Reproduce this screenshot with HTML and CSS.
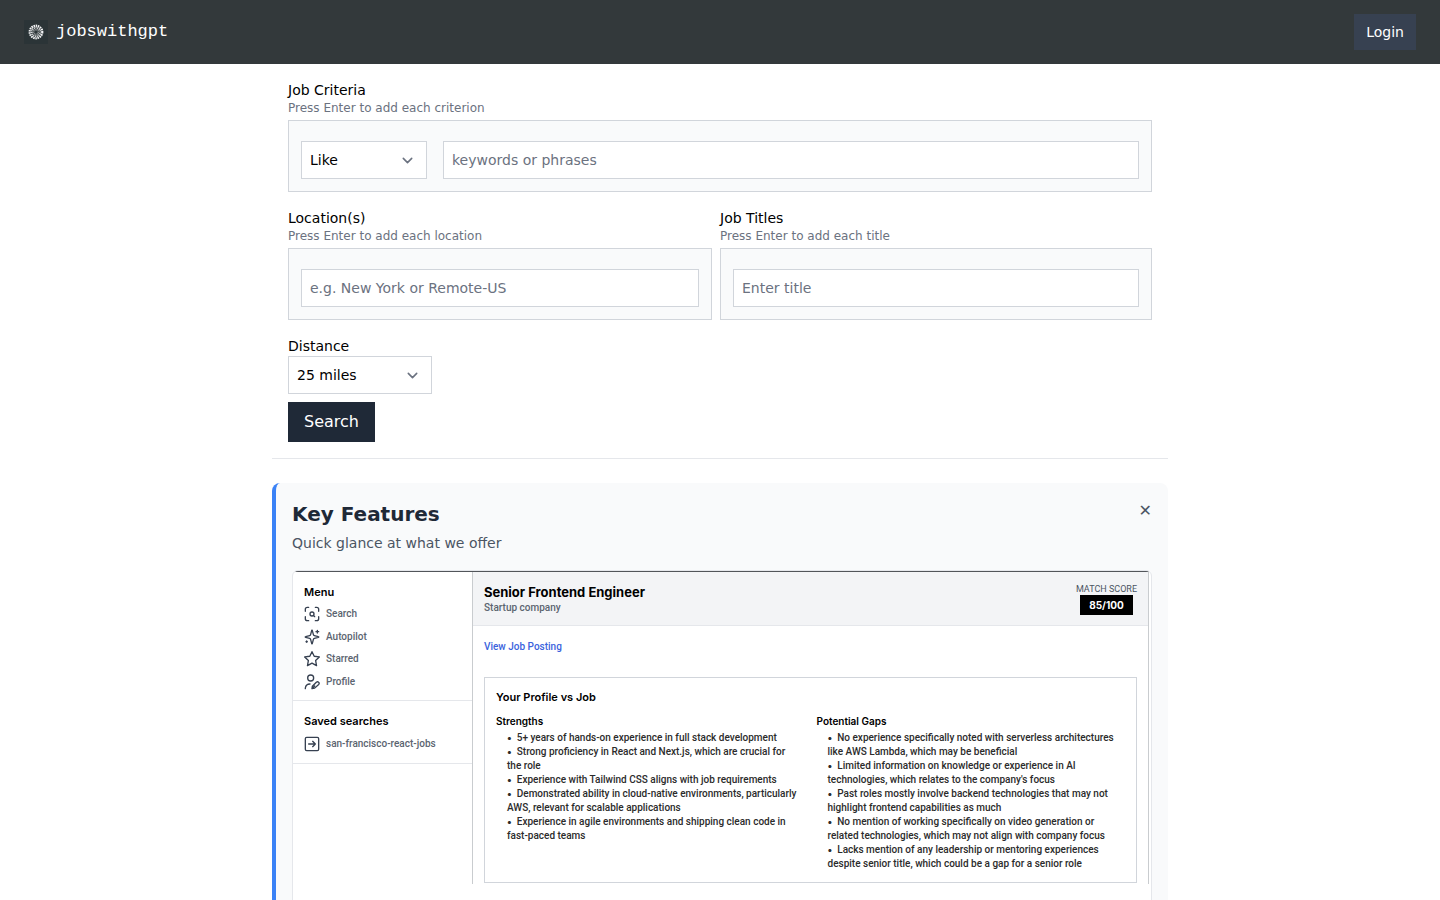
FILE: index.html
```
<!DOCTYPE html>
<html lang="en">
<head>
    <meta charset="UTF-8">
    <meta name="viewport" content="width=device-width, initial-scale=1.0">
    <title>jobswithgpt</title>
    <link rel="stylesheet" href="styles.css">
</head>
<body>

    <header class="navbar">
        <a class="brand" href="/">
            <svg class="brand-logo" viewBox="0 0 24 24" aria-hidden="true">
                <rect width="24" height="24" fill="#2b3437"/>
                <g fill="none" stroke="#f3f4f6">
                    <circle cx="12" cy="12" r="6.3" stroke-width="2.2" stroke-dasharray="1.5 0.7"/>
                    <circle cx="12" cy="12" r="4.3" stroke-width="1.8" stroke-dasharray="1.1 0.7" stroke-dashoffset="0.6" stroke-opacity="0.85"/>
                    <circle cx="12" cy="12" r="2.4" stroke-width="1.6" stroke-dasharray="1 0.5" stroke-opacity="0.5"/>
                </g>
            </svg>
            <span>jobswithgpt</span>
        </a>
        <a class="login-btn" href="/login">Login</a>
    </header>

    <main class="page">
        <form class="search-form">
            <div class="field">
                <label for="criteria">Job Criteria</label>
                <p class="hint">Press Enter to add each criterion</p>
                <div class="field-box">
                    <div class="select-wrap select-like">
                        <select id="match-type" aria-label="Match type">
                            <option>Like</option>
                            <option>Not like</option>
                        </select>
                        <svg class="chevron" viewBox="0 0 20 20"><path d="M6 8l4 4 4-4"/></svg>
                    </div>
                    <input type="text" id="criteria" placeholder="keywords or phrases">
                </div>
            </div>

            <div class="field-row">
                <div class="field">
                    <label for="location">Location(s)</label>
                    <p class="hint">Press Enter to add each location</p>
                    <div class="field-box">
                        <input type="text" id="location" placeholder="e.g. New York or Remote-US">
                    </div>
                </div>
                <div class="field">
                    <label for="title">Job Titles</label>
                    <p class="hint">Press Enter to add each title</p>
                    <div class="field-box">
                        <input type="text" id="title" placeholder="Enter title">
                    </div>
                </div>
            </div>

            <div class="field-distance">
                <label for="distance">Distance</label>
                <div class="select-wrap select-distance">
                    <select id="distance">
                        <option>25 miles</option>
                        <option>50 miles</option>
                        <option>100 miles</option>
                    </select>
                    <svg class="chevron" viewBox="0 0 20 20"><path d="M6 8l4 4 4-4"/></svg>
                </div>
            </div>

            <button type="submit" class="search-btn">Search</button>
        </form>

        <section class="features">
            <div class="features-header">
                <div>
                    <h2>Key Features</h2>
                    <p>Quick glance at what we offer</p>
                </div>
                <button type="button" class="close-btn" aria-label="Close">✕</button>
            </div>

            <div class="slide">
                <div class="preview">
                    <aside class="sidebar">
                        <nav class="side-group">
                            <h3>Menu</h3>
                            <ul class="side-menu">
                                <li>
                                    <svg class="icon" viewBox="0 0 24 24"><path d="M2 8V5a3 3 0 0 1 3-3h2M17 2h2a3 3 0 0 1 3 3v3M22 16v3a3 3 0 0 1-3 3h-2M7 22H5a3 3 0 0 1-3-3v-3M16 16l-1.900-1.900"/><circle cx="12" cy="12" r="3"/></svg>
                                    Search
                                </li>
                                <li>
                                    <svg class="icon" viewBox="0 0 24 24"><path d="M9.900 15.500A2 2 0 0 0 8.500 14.100L2.400 12.500a.5.5 0 0 1 0-1L8.500 9.900A2 2 0 0 0 9.900 8.500l1.600-6.100a.5.5 0 0 1 1 0L14.100 8.500A2 2 0 0 0 15.500 9.900l6.100 1.600a.5.5 0 0 1 0 1L15.500 14.100a2 2 0 0 0-1.400 1.400l-1.600 6.100a.5.5 0 0 1-1 0zM20 2v4M22 4h-4M4 18v2M5 19H3"/></svg>
                                    Autopilot
                                </li>
                                <li>
                                    <svg class="icon" viewBox="0 0 24 24"><path d="M12 1l3.300 6.900 7.700 1-5.600 5.300 1.400 7.800L12 18.300 5.200 22l1.400-7.800L1 8.900l7.700-1z"/></svg>
                                    Starred
                                </li>
                                <li>
                                    <svg class="icon" viewBox="0 0 24 24"><circle cx="10" cy="6" r="4.500"/><path d="M2 22v-1a7 7 0 0 1 7-6M12 22l.5-3.500 6-6a2.100 2.100 0 0 1 3.500 3.200l-6 5.500zM12 22l4-4"/></svg>
                                    Profile
                                </li>
                            </ul>
                        </nav>
                        <div class="side-group">
                            <h3>Saved searches</h3>
                            <ul class="side-saved">
                                <li>
                                    <svg class="icon" viewBox="0 0 24 24"><rect x="2" y="2" width="20" height="20" rx="2"/><path d="M7 12h10M13 8l4 4-4 4"/></svg>
                                    san-francisco-react-jobs
                                </li>
                            </ul>
                        </div>
                    </aside>

                    <div class="job">
                        <div class="job-header">
                            <div>
                                <h3>Senior Frontend Engineer</h3>
                                <p>Startup company</p>
                            </div>
                            <div class="score">
                                <span class="score-label">MATCH SCORE</span>
                                <span class="score-value">85/100</span>
                            </div>
                        </div>
                        <a class="job-link" href="#">View Job Posting</a>
                        <div class="compare">
                            <h4>Your Profile vs Job</h4>
                            <div class="compare-cols">
                                <div>
                                    <h5>Strengths</h5>
                                    <ul>
                                        <li>5+ years of hands-on experience in full stack development</li>
                                        <li>Strong proficiency in React and Next.js, which are crucial for the role</li>
                                        <li>Experience with Tailwind CSS aligns with job requirements</li>
                                        <li>Demonstrated ability in cloud-native environments, particularly AWS, relevant for scalable applications</li>
                                        <li>Experience in agile environments and shipping clean code in fast-paced teams</li>
                                    </ul>
                                </div>
                                <div>
                                    <h5>Potential Gaps</h5>
                                    <ul>
                                        <li>No experience specifically noted with serverless architectures like AWS Lambda, which may be beneficial</li>
                                        <li>Limited information on knowledge or experience in AI technologies, which relates to the company's focus</li>
                                        <li>Past roles mostly involve backend technologies that may not highlight frontend capabilities as much</li>
                                        <li>No mention of working specifically on video generation or related technologies, which may not align with company focus</li>
                                        <li>Lacks mention of any leadership or mentoring experiences despite senior title, which could be a gap for a senior role</li>
                                    </ul>
                                </div>
                            </div>
                        </div>
                    </div>
                </div>
            </div>
        </section>
    </main>

</body>
</html>
```
FILE: styles.css
```
* {
    box-sizing: border-box;
}
body {
    margin: 0;
    font-family: 'DejaVu Sans', sans-serif;
    font-size: 14px;
    line-height: 20px;
    color: #000;
    background-color: #fff;
}
h2, h3, h4, h5, p, ul {
    margin: 0;
    padding: 0;
}
ul {
    list-style: none;
}

/* Top bar */
.navbar {
    display: flex;
    align-items: center;
    justify-content: space-between;
    height: 64px;
    padding: 0 24px;
    background-color: #33393b;
}
.brand {
    display: flex;
    align-items: center;
    gap: 8px;
    color: #fff;
    font-family: 'Liberation Mono', monospace;
    font-size: 17px;
    text-decoration: none;
}
.brand-logo {
    width: 24px;
    height: 24px;
}
.login-btn {
    padding: 8px 12px;
    color: #fff;
    background-color: #374151;
    text-decoration: none;
}

/* Search form */
.page {
    max-width: 896px;
    margin: 0 auto;
}
.search-form {
    padding: 16px;
    border-bottom: 1px solid #e5e7eb;
}
label {
    display: block;
}
.hint {
    margin-bottom: 4px;
    font-size: 12px;
    line-height: 16px;
    color: #6b7280;
}
.field {
    margin-bottom: 16px;
}
.field-row {
    display: grid;
    grid-template-columns: 1fr 1fr;
}
.field-row .field:first-child {
    padding-right: 8px;
}
.field-box {
    display: flex;
    gap: 16px;
    padding: 20px 12px 12px;
    border: 1px solid #d1d5db;
    background-color: #f9fafb;
}
input,
select {
    width: 100%;
    height: 38px;
    padding: 8px;
    border: 1px solid #d1d5db;
    border-radius: 0;
    font: inherit;
    color: #000;
    background-color: #fff;
}
input::placeholder {
    color: #6b7280;
    opacity: 1;
}
select {
    appearance: none;
}
.select-wrap {
    position: relative;
    flex-shrink: 0;
}
.select-like {
    width: 126px;
}
.select-distance {
    width: 144px;
}
.chevron {
    position: absolute;
    top: 9px;
    right: 9px;
    width: 21px;
    height: 21px;
    fill: none;
    stroke: #6b7280;
    stroke-width: 1.5;
    stroke-linecap: round;
    stroke-linejoin: round;
    pointer-events: none;
}
.field-distance {
    margin-bottom: 8px;
}
.search-btn {
    display: block;
    padding: 8px 16px;
    border: none;
    color: #fff;
    background-color: #1f2937;
    font: inherit;
    font-size: 16px;
    line-height: 24px;
    cursor: pointer;
}

/* Key features */
.features {
    margin-top: 24px;
    padding: 16px;
    border-left: 4px solid #3b82f6;
    border-radius: 8px;
    background-color: #f9fafb;
}
.features-header {
    display: flex;
    align-items: flex-start;
    justify-content: space-between;
    margin-bottom: 17px;
}
.features-header h2 {
    margin-bottom: 4px;
    font-size: 20px;
    line-height: 30px;
    color: #1f2937;
}
.features-header p {
    color: #4b5563;
}
.close-btn {
    padding: 0;
    border: none;
    background: none;
    font: inherit;
    font-size: 16px;
    line-height: 24px;
    color: #4b5563;
    cursor: pointer;
}
.slide {
    min-height: 400px;
    overflow: hidden;
    border: 1px solid #e5e7eb;
    border-radius: 6px;
    background-color: #fff;
}

/* App preview inside the slide */
.preview {
    display: flex;
    padding-right: 2px;
    border-top: 1px solid #52555a;
    font-family: Roboto, sans-serif;
    font-size: 10px;
    font-weight: 500;
    line-height: 14px;
}
.preview h3,
.preview h4,
.preview h5 {
    font-family: Inter, sans-serif;
    font-weight: 600;
}
.sidebar {
    flex: 0 0 179px;
}
.side-group {
    padding: 12px 11px 7px;
    border-bottom: 1px solid #e5e7eb;
}
.side-group h3 {
    font-size: 11px;
    line-height: 16px;
}
.side-menu {
    display: flex;
    flex-direction: column;
    height: 93px;
    padding-top: 3px;
}
.side-group li {
    display: flex;
    flex: 1;
    align-items: center;
    gap: 6px;
    color: #5b6470;
}
.side-saved {
    padding: 7px 0 4px;
}
.icon {
    width: 16px;
    height: 16px;
    fill: none;
    stroke: #374151;
    stroke-width: 2;
    stroke-linecap: round;
    stroke-linejoin: round;
}
.job {
    flex: 1;
    border-left: 1px solid #c9cccf;
    border-right: 1px solid #c9cccf;
}
.job-header {
    display: flex;
    justify-content: space-between;
    padding: 12px 11px 10px;
    border-bottom: 1px solid #e5e7eb;
    background-color: #f3f4f6;
}
.preview .job-header h3 {
    margin-bottom: 1px;
    font-size: 13px;
    line-height: 16px;
    font-weight: 700;
}
.job-header p {
    color: #5b6470;
}
.score {
    display: flex;
    flex-direction: column;
    align-items: center;
}
.score-label {
    font-size: 9px;
    font-weight: 400;
    line-height: 11px;
    color: #4b5563;
}
.score-value {
    padding: 3px 9px;
    color: #fff;
    background-color: #000;
    font-family: Inter, sans-serif;
    font-weight: 700;
}
.job-link {
    display: block;
    padding: 14px 11px 23px;
    color: #3b63dd;
    text-decoration: none;
}
.compare {
    margin: 0 11px 1px;
    padding: 11px 11px 10px;
    border: 1px solid #d1d5db;
}
.compare h4 {
    margin-bottom: 9px;
    font-size: 11px;
    line-height: 16px;
}
.compare-cols {
    display: grid;
    grid-template-columns: 1fr 1fr;
    gap: 12px;
}
.compare h5 {
    margin-bottom: 3px;
    font-size: 10px;
}
.compare ul {
    padding: 0 6px 1px 11px;
    color: #2b2b2b;
}
.compare li::before {
    content: '•';
    margin-right: 5px;
    font-family: Inter, sans-serif;
    font-weight: 700;
    line-height: 1;
}
```
